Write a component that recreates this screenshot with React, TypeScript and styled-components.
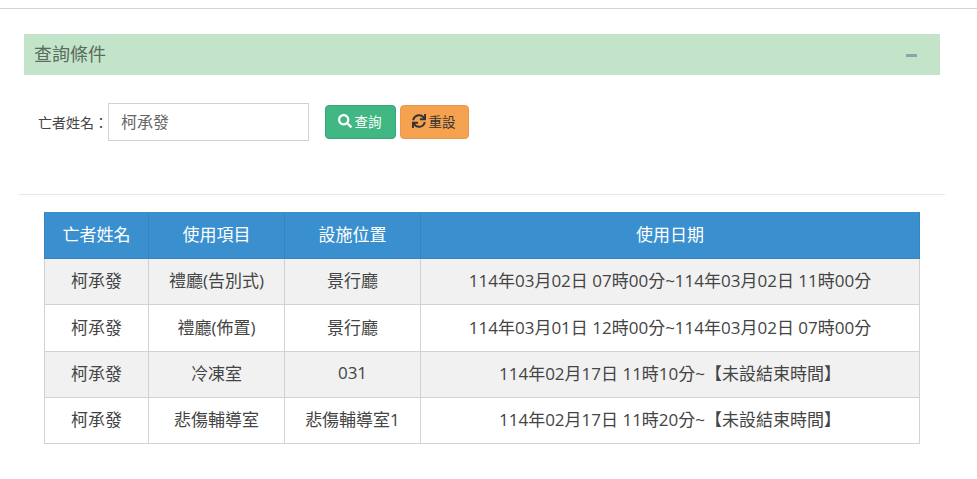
import React from "react";
import styled, { createGlobalStyle } from "styled-components";
import { FaSearch, FaSync } from "react-icons/fa";

const Global = createGlobalStyle`
  html, body { margin: 0; padding: 0; background: #fff; }
  body { font-family: "Open Sans", "Noto Sans CJK TC", sans-serif; color: #333; }
`;

const Page = styled.div`
  width: 977px;
  height: 479px;
  overflow: hidden;
  padding-top: 8px;
  box-sizing: border-box;
`;

const TopRule = styled.div`
  height: 1px;
  background: #d4d4d4;
`;

const Panel = styled.section`
  margin: 25px 37px 0 24px;
`;

const PanelHead = styled.header`
  height: 41px;
  background: #c3e4c9;
  display: flex;
  align-items: center;
  justify-content: space-between;
  padding: 0 23px 0 10px;
`;

const PanelTitle = styled.h3`
  margin: 0 0 4px;
  font-size: 18px;
  font-weight: 400;
  color: #5a6b60;
`;

const Collapse = styled.span`
  display: block;
  width: 11px;
  height: 3px;
  margin-top: 2px;
  background: #8aa5a3;
`;

const SearchForm = styled.form`
  display: flex;
  align-items: center;
  height: 38px;
  margin-top: 28px;
  padding-left: 14px;
`;

const Label = styled.label`
  font-size: 14px;
  width: 70px;
  margin-top: -1px;
  color: #444;
  white-space: nowrap;
`;

const NameInput = styled.input`
  box-sizing: border-box;
  width: 201px;
  height: 38px;
  padding: 0 12px 3px;
  border: 1px solid #d2d2d2;
  font: 400 16px "Open Sans", "Noto Sans CJK TC", sans-serif;
  color: #666;
  outline: none;
`;

const Action = styled.button<{ $bg: string; $edge: string; $ink: string; $w: number }>`
  box-sizing: border-box;
  width: ${(p) => p.$w}px;
  height: 34px;
  margin-left: ${(p) => (p.$w === 71 ? 16 : 4)}px;
  display: inline-flex;
  align-items: center;
  justify-content: center;
  gap: 3px;
  padding: 0 2px 2px 0;
  background: ${(p) => p.$bg};
  border: 1px solid ${(p) => p.$edge};
  border-radius: 4px;
  color: ${(p) => p.$ink};
  font: 400 13.5px "Open Sans", "Noto Sans CJK TC", sans-serif;

  svg {
    width: 14px;
    height: 14px;
  }
`;

const Divider = styled.hr`
  margin: 53px 32px 0 19px;
  border: 0;
  border-top: 1px solid #e8e8e8;
`;

const Results = styled.table`
  margin: 17px 0 0 44px;
  width: 876px;
  table-layout: fixed;
  border-collapse: collapse;
  font-size: 17px;
  text-align: center;
  color: #444;
`;

const Head = styled.th<{ $w?: number }>`
  width: ${(p) => (p.$w ? `${p.$w}px` : "auto")};
  height: 46px;
  padding: 0 0 4px;
  box-sizing: border-box;
  background: #3a90ce;
  border: 1px solid #3584bd;
  border-top-color: #3a90ce;
  font-size: 17px;
  font-weight: 400;
  color: #fff;
`;

const Row = styled.tr<{ $striped: boolean; $h: number }>`
  height: ${(p) => p.$h}px;
  background: ${(p) => (p.$striped ? "#f1f1f1" : "#fff")};
`;

const Cell = styled.td`
  padding: 0 0 4px;
  box-sizing: border-box;
  border: 1px solid #d2d2d2;
`;

const rows = [
  ["柯承發", "禮廳(告別式)", "景行廳", "114年03月02日 07時00分~114年03月02日 11時00分", 46],
  ["柯承發", "禮廳(佈置)", "景行廳", "114年03月01日 12時00分~114年03月02日 07時00分", 47],
  ["柯承發", "冷凍室", "031", "114年02月17日 11時10分~【未設結束時間】", 46],
  ["柯承發", "悲傷輔導室", "悲傷輔導室1", "114年02月17日 11時20分~【未設結束時間】", 46],
] as const;

export default function App() {
  return (
    <Page>
      <Global />
      <TopRule />
      <Panel>
        <PanelHead>
          <PanelTitle>查詢條件</PanelTitle>
          <Collapse />
        </PanelHead>
        <SearchForm>
          <Label>亡者姓名：</Label>
          <NameInput defaultValue="柯承發" />
          <Action type="button" $w={71} $bg="#41b883" $edge="#3aa576" $ink="#fff">
            <FaSearch />查詢
          </Action>
          <Action type="button" $w={69} $bg="#f4a24f" $edge="#e8994a" $ink="#333">
            <FaSync />重設
          </Action>
        </SearchForm>
      </Panel>
      <Divider />
      <Results>
        <thead>
          <tr>
            <Head $w={104}>亡者姓名</Head>
            <Head $w={136}>使用項目</Head>
            <Head $w={136}>設施位置</Head>
            <Head>使用日期</Head>
          </tr>
        </thead>
        <tbody>
          {rows.map((r, i) => (
            <Row key={i} $striped={i % 2 === 0} $h={r[4]}>
              <Cell>{r[0]}</Cell>
              <Cell>{r[1]}</Cell>
              <Cell>{r[2]}</Cell>
              <Cell>{r[3]}</Cell>
            </Row>
          ))}
        </tbody>
      </Results>
    </Page>
  );
}
